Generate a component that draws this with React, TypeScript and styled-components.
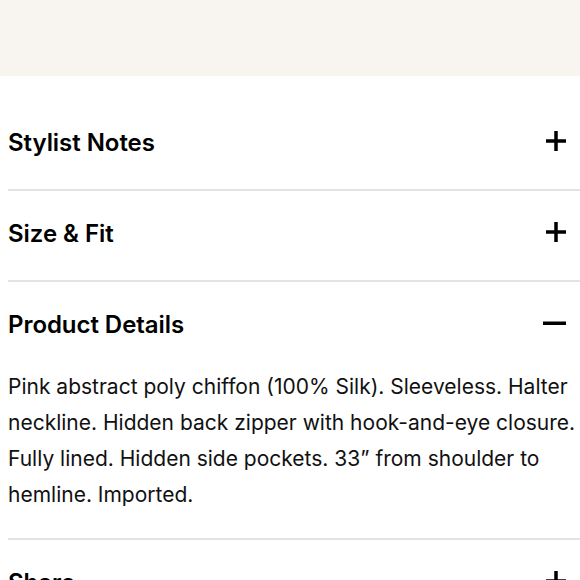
import React, { useState } from "react";
import styled, { createGlobalStyle } from "styled-components";

const GlobalStyle = createGlobalStyle`
  html, body {
    margin: 0;
    padding: 0;
    background: #ffffff;
  }
  body {
    font-family: Inter, "Noto Sans", "Liberation Sans", sans-serif;
    color: #111;
    -webkit-font-smoothing: antialiased;
  }
`;

interface Section {
  title: string;
  body?: string;
}

const sections: Section[] = [
  { title: "Stylist Notes" },
  { title: "Size & Fit" },
  {
    title: "Product Details",
    body:
      "Pink abstract poly chiffon (100% Silk). Sleeveless. Halter neckline. Hidden back zipper with hook-and-eye closure. Fully lined. Hidden side pockets. 33\u201D from shoulder to hemline. Imported.",
  },
  { title: "Share" },
];

function PlusIcon() {
  return (
    <svg width="20" height="20" viewBox="0 0 20 20">
      <rect x="8.25" y="0" width="3.5" height="20" fill="#000" />
      <rect x="0" y="8.25" width="20" height="3.5" fill="#000" />
    </svg>
  );
}

function MinusIcon() {
  return (
    <svg width="23" height="20" viewBox="0 0 23 20">
      <rect x="0" y="8.5" width="23" height="3.5" fill="#000" />
    </svg>
  );
}

function App() {
  const [open, setOpen] = useState<string>("Product Details");

  return (
    <Page>
      <GlobalStyle />
      <Banner />
      <Accordion>
        {sections.map((s) => {
          const isOpen = open === s.title;
          return (
            <Item key={s.title}>
              <Header onClick={() => setOpen(isOpen ? "" : s.title)}>
                <Title>{s.title}</Title>
                <IconSlot>{isOpen ? <MinusIcon /> : <PlusIcon />}</IconSlot>
              </Header>
              {isOpen && s.body && <Body>{s.body}</Body>}
            </Item>
          );
        })}
      </Accordion>
    </Page>
  );
}

const Page = styled.div`
  width: 580px;
  height: 580px;
  overflow: hidden;
  background: #fff;
`;

const Banner = styled.div`
  height: 76px;
  background-color: #f8f4f0;
`;

const Accordion = styled.div`
  margin-top: 24px;
  margin-left: 8px;
  display: flex;
  flex-direction: column;
`;

const Item = styled.div`
  border-bottom: 2px solid #e3e3e3;
`;

const Header = styled.div`
  display: flex;
  justify-content: space-between;
  align-items: center;
  padding: 30px 14px 33px 0;
  cursor: pointer;
`;

const Title = styled.div`
  font-size: 24px;
  line-height: 26px;
  font-weight: 600;
  color: #000;
  letter-spacing: -0.05px;
`;

const IconSlot = styled.div`
  display: flex;
  align-items: center;
  height: 26px;
  margin-top: -4px;
`;

const Body = styled.p`
  margin: -2px -8px 0 0;
  padding: 0 0 25px 0;
  font-size: 21px;
  line-height: 36px;
  font-weight: 400;
  color: #111;
`;

export default App;
